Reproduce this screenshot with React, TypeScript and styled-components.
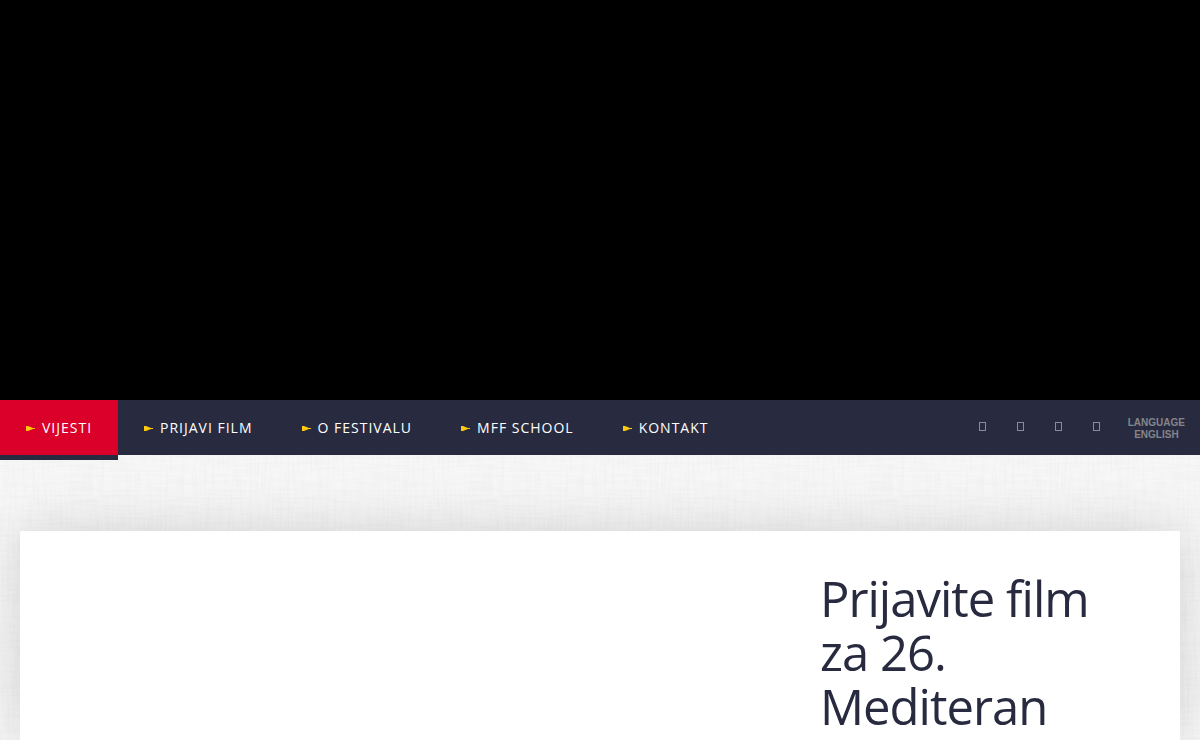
import React from "react";
import styled, { createGlobalStyle } from "styled-components";

const weave = (frequency: string, seed: number) =>
  `url("data:image/svg+xml,${encodeURIComponent(
    `<svg xmlns='http://www.w3.org/2000/svg' width='400' height='300'><filter id='n' x='0' y='0' width='100%' height='100%'><feTurbulence type='fractalNoise' baseFrequency='${frequency}' numOctaves='2' seed='${seed}' stitchTiles='stitch'/><feColorMatrix values='0 0 0 0 0.5  0 0 0 0 0.5  0 0 0 0 0.5  0.15 0 0 0 -0.06'/></filter><rect width='400' height='300' filter='url(#n)'/></svg>`
  )}")`;

const GlobalStyle = createGlobalStyle`
  * { box-sizing: border-box; }
  body {
    margin: 0;
    background-color: #f7f7f7;
    background-image: ${weave("0.03 0.4", 4)}, ${weave("0.4 0.03", 9)};
    font-family: "Segoe UI", "Open Sans", "Noto Sans", sans-serif;
    color: #282b3f;
  }
`;

const Page = styled.div`
  display: flex;
  flex-direction: column;
  min-height: 100vh;
  overflow: hidden;
`;

const Hero = styled.header`
  flex: none;
  height: 400px;
  background: #000;
`;

const NavBar = styled.nav`
  position: relative;
  z-index: 1;
  display: flex;
  flex: none;
  justify-content: space-between;
  height: 55px;
  background: #282b3f;
`;

const Menu = styled.div`
  display: flex;
`;

const MenuLink = styled.a<{ $active?: boolean }>`
  display: flex;
  align-items: center;
  gap: 6px;
  min-width: 118px;
  height: ${(p) => (p.$active ? "60px" : "55px")};
  padding: 0 23px 0 26px;
  border-bottom: ${(p) => (p.$active ? "5px solid #282b3f" : "none")};
  background: ${(p) => (p.$active ? "#da0029" : "transparent")};
  color: #fff;
  font-size: 14px;
  line-height: 20px;
  letter-spacing: 1px;
  text-decoration: none;
  text-transform: uppercase;
  white-space: nowrap;
`;

const Marker = styled.svg`
  flex: none;
  width: 10px;
  height: 6px;
  margin-top: 2px;
`;

const Tools = styled.div`
  display: flex;
  align-items: center;
  padding-right: 15px;
`;

const SocialLink = styled.a`
  display: flex;
  justify-content: center;
  width: 38px;
  padding: 20px 0 22px;
`;

const Glyph = styled.span`
  width: 7px;
  height: 9px;
  border: 1px solid #8b8b93;
`;

const LanguageLink = styled.a`
  margin-left: 12px;
  padding-top: 2px;
  color: #85858b;
  font: bold 10px/12px "Liberation Sans", Arial, sans-serif;
  text-align: center;
  text-decoration: none;
  text-transform: uppercase;
`;

const Main = styled.main`
  display: flex;
  flex: 1;
  padding: 76px 20px 0;
`;

const Card = styled.article`
  display: grid;
  flex: 1;
  grid-template-columns: minmax(0, 1fr) 320px;
  padding: 40px 40px 0;
  background: #fff;
  box-shadow: 0 0 50px rgba(0, 0, 0, 0.15);
`;

const Title = styled.h1`
  grid-column: 2;
  margin: 0;
  font-size: 49px;
  font-weight: 400;
  line-height: 54px;
  letter-spacing: -1px;
`;

const menu = ["Vijesti", "Prijavi film", "O festivalu", "MFF School", "Kontakt"];
const social = ["Facebook", "Twitter", "YouTube", "Instagram"];

export default function App() {
  return (
    <>
      <GlobalStyle />
      <Page>
        <Hero />
        <NavBar>
          <Menu>
            {menu.map((label, i) => (
              <MenuLink key={label} href="#" $active={i === 0}>
                <Marker viewBox="0 0 10 6" aria-hidden="true">
                  <path d="M0 0H2L7 2H9V3H7L2 5H0Z" fill="#ffc90e" />
                </Marker>
                {label}
              </MenuLink>
            ))}
          </Menu>
          <Tools>
            {social.map((name) => (
              <SocialLink key={name} href="#" aria-label={name}>
                <Glyph />
              </SocialLink>
            ))}
            <LanguageLink href="#">
              Language
              <br />
              English
            </LanguageLink>
          </Tools>
        </NavBar>
        <Main>
          <Card>
            <Title>Prijavite film za 26. Mediteran</Title>
          </Card>
        </Main>
      </Page>
    </>
  );
}
